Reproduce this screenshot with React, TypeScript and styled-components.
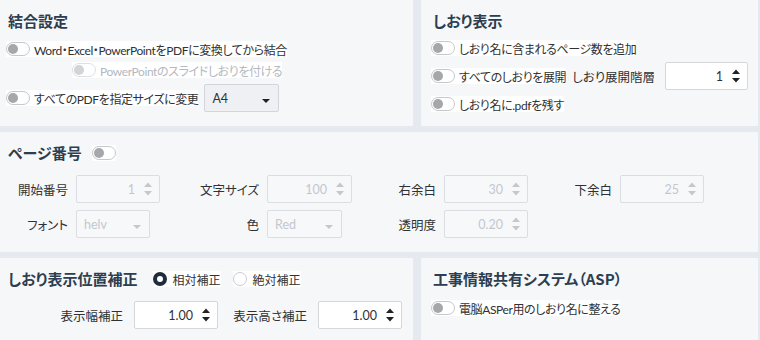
import styled, { createGlobalStyle } from "styled-components";

const GlobalStyle = createGlobalStyle`
  html, body {
    margin: 0;
    padding: 0;
    background: #e5eaf1;
  }
  body {
    font-family: Lato, "Noto Sans CJK JP", "Noto Sans", sans-serif;
    font-feature-settings: "palt";
    color: #303133;
  }
`;

const Page = styled.div`
  width: 758px;
  height: 340px;
  padding-right: 2px;
  display: grid;
  grid-template-columns: 413px 337px;
  grid-template-rows: 126px 120px 82px;
  column-gap: 8px;
  row-gap: 6px;
  overflow: hidden;
`;

const Panel = styled.section<{ $wide?: boolean; $pad?: number }>`
  background: #f6f7f9;
  box-sizing: border-box;
  padding: 10px ${(p) => p.$pad ?? 6}px 0;
  display: flex;
  flex-direction: column;
  ${(p) => (p.$wide ? "grid-column: 1 / span 2;" : "")}
`;

const TitleRow = styled.div<{ $gap?: number }>`
  display: flex;
  align-items: center;
  height: 22px;
  gap: ${(p) => p.$gap ?? 15}px;
`;

const Title = styled.h2`
  margin: 0 0 0 2px;
  font-family: "Noto Sans CJK JP", sans-serif;
  font-size: 15px;
  line-height: 22px;
  font-weight: 700;
  color: #2c3e50;
  white-space: nowrap;
`;

const Row = styled.div<{ $top?: number; $h?: number; $indent?: number }>`
  display: flex;
  align-items: center;
  height: ${(p) => p.$h ?? 22}px;
  margin-top: ${(p) => p.$top ?? 0}px;
  padding-left: ${(p) => p.$indent ?? 0}px;
`;

const ToggleItem = styled.label<{ $disabled?: boolean }>`
  display: inline-flex;
  align-items: center;
  gap: 4px;
  height: 16px;
  background: #fff;
  font-size: 12px;
  letter-spacing: -0.4px;
  white-space: nowrap;
  color: ${(p) => (p.$disabled ? "#b4b8bf" : "#303133")};
`;

const Switch = styled.span<{ $disabled?: boolean }>`
  position: relative;
  display: inline-block;
  width: 24px;
  height: 14px;
  box-sizing: border-box;
  border: 1px solid ${(p) => (p.$disabled ? "#dcdfe4" : "#c6c8cc")};
  border-radius: 8px;
  background: #fff;
  &::after {
    content: "";
    position: absolute;
    left: 1px;
    top: 1px;
    width: 10px;
    height: 10px;
    border-radius: 50%;
    background: ${(p) => (p.$disabled ? "#d2d4d8" : "#a5a7ab")};
  }
`;

const FieldLabel = styled.span<{ $ml?: number; $mr?: number }>`
  font-size: 12.5px;
  color: #303133;
  white-space: nowrap;
  margin-left: ${(p) => p.$ml ?? 0}px;
  margin-right: ${(p) => p.$mr ?? 0}px;
`;

const GridLabel = styled.span`
  font-size: 12.5px;
  color: #303133;
  text-align: right;
  white-space: nowrap;
`;

const NumberBox = styled.div<{ $w?: number; $disabled?: boolean }>`
  position: relative;
  width: ${(p) => p.$w ?? 85}px;
  height: 28px;
  box-sizing: border-box;
  border: 1px solid ${(p) => (p.$disabled ? "#dadde2" : "#d4d7dc")};
  border-radius: 2px;
  background: ${(p) => (p.$disabled ? "#f7f8fa" : "#fff")};
  display: flex;
  align-items: center;
  justify-content: flex-end;
  padding-right: 24px;
  font-size: 12.5px;
  color: ${(p) => (p.$disabled ? "#c3c7ce" : "#303133")};
`;

const Spinner = styled.svg`
  position: absolute;
  right: 6px;
  top: 50%;
  margin-top: -8px;
`;

const SelectBox = styled.div<{ $w?: number; $disabled?: boolean; $ml?: number }>`
  position: relative;
  width: ${(p) => p.$w ?? 74}px;
  height: 28px;
  margin-left: ${(p) => p.$ml ?? 0}px;
  box-sizing: border-box;
  border: 1px solid ${(p) => (p.$disabled ? "#dadde2" : "#d2d6dc")};
  border-radius: 2px;
  background: ${(p) => (p.$disabled ? "#f7f8fa" : "#eef0f3")};
  display: flex;
  align-items: center;
  padding-left: 7px;
  font-size: 12.5px;
  color: ${(p) => (p.$disabled ? "#c3c7ce" : "#303133")};
  &::after {
    content: "";
    position: absolute;
    right: 8px;
    bottom: 8px;
    border-left: 4px solid transparent;
    border-right: 4px solid transparent;
    border-top: 4px solid ${(p) => (p.$disabled ? "#c3c7ce" : "#222")};
  }
`;

const PageGrid = styled.div`
  display: grid;
  grid-template-columns: 60px 84px 91px 85px 76px 84px 76px 84px;
  grid-auto-rows: 28px;
  column-gap: 8px;
  row-gap: 7px;
  align-items: center;
  margin-top: 11px;
  padding-left: 2px;
`;

const OffsetGrid = styled.div`
  display: grid;
  grid-template-columns: 115px 84px 78px 84px;
  grid-auto-rows: 28px;
  column-gap: 11px;
  align-items: center;
  margin-top: 11px;
  padding-left: 2px;
`;

const RadioGroup = styled.div`
  display: flex;
  align-items: center;
  gap: 12px;
`;

const RadioItem = styled.label`
  display: inline-flex;
  align-items: center;
  gap: 6px;
  height: 16px;
  background: #fff;
  font-size: 12px;
  white-space: nowrap;
`;

const RadioDot = styled.span<{ $on?: boolean }>`
  width: 14px;
  height: 14px;
  box-sizing: border-box;
  border-radius: 50%;
  background: #fff;
  border: ${(p) => (p.$on ? "4px solid #1f2d3d" : "1px solid #c9ccd1")};
`;

const Arrows = ({ disabled }: { disabled?: boolean }) => {
  const c = disabled ? "#c3c7ce" : "#222";
  return (
    <Spinner width="10" height="16" viewBox="0 0 10 16">
      <path d="M1 6 L5 1.5 L9 6 Z" fill={c} />
      <path d="M1 10 L5 14.5 L9 10 Z" fill={c} />
    </Spinner>
  );
};

const Num = ({ value, w, disabled }: { value: string; w?: number; disabled?: boolean }) => (
  <NumberBox $w={w} $disabled={disabled}>
    {value}
    <Arrows disabled={disabled} />
  </NumberBox>
);

const Toggle = ({ label, disabled }: { label?: string; disabled?: boolean }) => (
  <ToggleItem $disabled={disabled}>
    <Switch $disabled={disabled} />
    {label}
  </ToggleItem>
);

const App = () => {
  return (
    <>
      <GlobalStyle />
      <Page>
        <Panel>
          <TitleRow>
            <Title>結合設定</Title>
          </TitleRow>
          <Row $top={6}>
            <Toggle label="Word・Excel・PowerPointをPDFに変換してから結合" />
          </Row>
          <Row $h={20} $indent={66}>
            <Toggle label="PowerPointのスライドしおりを付ける" disabled />
          </Row>
          <Row $top={4} $h={28}>
            <Toggle label="すべてのPDFを指定サイズに変更" />
            <SelectBox $w={75} $ml={6}>A4</SelectBox>
          </Row>
        </Panel>

        <Panel $pad={10}>
          <TitleRow>
            <Title>しおり表示</Title>
          </TitleRow>
          <Row $top={2} $h={28}>
            <Toggle label="しおり名に含まれるページ数を追加" />
          </Row>
          <Row $h={28}>
            <Toggle label="すべてのしおりを展開" />
            <FieldLabel $ml={6} $mr={10}>しおり展開階層</FieldLabel>
            <Num value="1" w={86} />
          </Row>
          <Row $h={28}>
            <Toggle label="しおり名に.pdfを残す" />
          </Row>
        </Panel>

        <Panel $wide>
          <TitleRow $gap={10}>
            <Title>ページ番号</Title>
            <Toggle />
          </TitleRow>
          <PageGrid>
            <GridLabel>開始番号</GridLabel>
            <Num value="1" w={84} disabled />
            <GridLabel>文字サイズ</GridLabel>
            <Num value="100" w={85} disabled />
            <GridLabel>右余白</GridLabel>
            <Num value="30" w={84} disabled />
            <GridLabel>下余白</GridLabel>
            <Num value="25" w={84} disabled />

            <GridLabel>フォント</GridLabel>
            <SelectBox $w={74} $disabled>helv</SelectBox>
            <GridLabel>色</GridLabel>
            <SelectBox $w={75} $disabled>Red</SelectBox>
            <GridLabel>透明度</GridLabel>
            <Num value="0.20" w={84} disabled />
          </PageGrid>
        </Panel>

        <Panel>
          <TitleRow>
            <Title>しおり表示位置補正</Title>
            <RadioGroup>
              <RadioItem>
                <RadioDot $on />
                相対補正
              </RadioItem>
              <RadioItem>
                <RadioDot />
                絶対補正
              </RadioItem>
            </RadioGroup>
          </TitleRow>
          <OffsetGrid>
            <GridLabel>表示幅補正</GridLabel>
            <Num value="1.00" w={84} />
            <GridLabel>表示高さ補正</GridLabel>
            <Num value="1.00" w={84} />
          </OffsetGrid>
        </Panel>

        <Panel $pad={10}>
          <TitleRow>
            <Title>工事情報共有システム（ASP）</Title>
          </TitleRow>
          <Row $top={4} $h={28}>
            <Toggle label="電脳ASPer用のしおり名に整える" />
          </Row>
        </Panel>
      </Page>
    </>
  );
};

export default App;
